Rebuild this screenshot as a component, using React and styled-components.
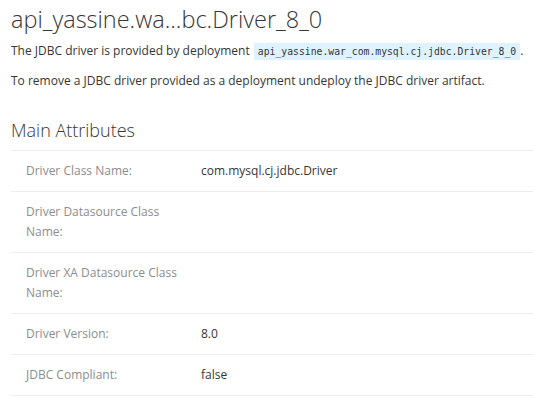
import styled, { createGlobalStyle } from 'styled-components';

const Global = createGlobalStyle`
    body {
        margin: 0;
        background: #fff;
        font-family: 'Open Sans', 'Liberation Sans', sans-serif;
        color: #363636;
    }
`
const Page = styled.div`
    padding: 0 0 0 11px;
`
const Title = styled.h1`
    font-size: 23.5px;
    font-weight: 300;
    line-height: 30px;
    margin: 4px 0 7px;
    color: #363636;
    white-space: nowrap;
`
const Text = styled.p`
    font-size: 12px;
    line-height: 20px;
    margin: 0 0 9px;
`
const Code = styled.code`
    font-family: 'DejaVu Sans Mono', 'Liberation Mono', monospace;
    font-size: 9.75px;
    background: #def3ff;
    padding: 3px 4px;
    margin-left: 1px;
    white-space: nowrap;
`
const Heading = styled.h2`
    font-size: 18px;
    font-weight: 300;
    line-height: 24px;
    margin: 27px 0 0 0;
    padding-bottom: 8px;
    border-bottom: 1px solid #ededed;
`
const Row = styled.div`
    display: grid;
    grid-template-columns: 160px 1fr;
    column-gap: 15px;
    padding: 10px 15px;
    font-size: 12px;
    line-height: 20px;
    border-bottom: 1px solid #ededed;
`
const Label = styled.div`
    color: #8b8d8f;
`
const Value = styled.div`
    color: #363636;
`

const attributes = [
    ['Driver Class Name:', 'com.mysql.cj.jdbc.Driver'],
    ['Driver Datasource Class Name:', ''],
    ['Driver XA Datasource Class Name:', ''],
    ['Driver Version:', '8.0'],
    ['JDBC Compliant:', 'false'],
];

function App(){
    return (
        <Page>
            <Global />
            <Title>api_yassine.wa...bc.Driver_8_0</Title>
            <Text>
                The JDBC driver is provided by deployment <Code>api_yassine.war_com.mysql.cj.jdbc.Driver_8_0</Code>.
            </Text>
            <Text>To remove a JDBC driver provided as a deployment undeploy the JDBC driver artifact.</Text>
            <Heading>Main Attributes</Heading>
            {attributes.map(([label, value]) => (
                <Row key={label}>
                    <Label>{label}</Label>
                    <Value>{value}</Value>
                </Row>
            ))}
        </Page>
    )
}
export default App;
